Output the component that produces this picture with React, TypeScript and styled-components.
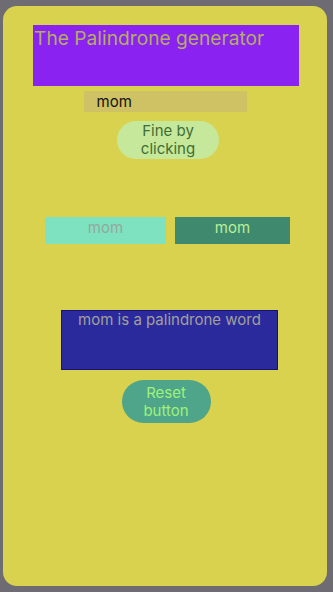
import React, { useState } from 'react'
import styled, { createGlobalStyle } from 'styled-components'

const GlobalStyle = createGlobalStyle`
    html, body {
        margin: 0;
        padding: 0;
        background: #6e6b72;
        font-family: Inter, "Noto Sans", sans-serif;
    }
`

const Screen = styled.div`
    box-sizing: border-box;
    width: 333px;
    height: 592px;
    padding: 6px 6px 6px 3px;
`

const Card = styled.div`
    display: flex;
    flex-direction: column;
    align-items: center;
    height: 580px;
    background: #d9d24e;
    border-radius: 14px;
`

const TitleBox = styled.div`
    box-sizing: border-box;
    width: 266px;
    height: 61px;
    margin: 19px 0 0 2px;
    padding-left: 1px;
    background: #8a22f2;
    color: #b4ad62;
    font-size: 19.2px;
    line-height: 26px;
`

const WordInput = styled.input`
    box-sizing: border-box;
    width: 163px;
    height: 21px;
    margin-top: 5px;
    padding: 0 0 0 13px;
    border: none;
    outline: none;
    background: #cfc264;
    color: #111;
    font-family: inherit;
    font-size: 15px;
`

const PillButton = styled.button<{ bg: string; fg: string; w: number; h: number; gap: number; shift: number }>`
    box-sizing: border-box;
    width: ${(p) => p.w}px;
    height: ${(p) => p.h}px;
    margin: ${(p) => p.gap}px 0 0 ${(p) => p.shift}px;
    padding: 0 18px;
    border: none;
    border-radius: ${(p) => p.h / 2}px;
    background: ${(p) => p.bg};
    color: ${(p) => p.fg};
    font-family: inherit;
    font-size: 15px;
    line-height: 18px;
`

const WordRow = styled.div`
    display: flex;
    gap: 9px;
    margin: 58px 0 0 5px;
`

const WordTile = styled.div<{ bg: string; fg: string; w: number }>`
    box-sizing: border-box;
    width: ${(p) => p.w}px;
    height: 27px;
    padding-top: 2px;
    background: ${(p) => p.bg};
    color: ${(p) => p.fg};
    text-align: center;
    font-size: 15px;
    line-height: 18px;
`

const ResultBox = styled.div`
    box-sizing: border-box;
    width: 217px;
    height: 60px;
    margin: 66px 0 0 9px;
    background: #2b2a9c;
    border: 1px solid #15137a;
    color: #a2a09a;
    text-align: center;
    font-size: 15px;
    line-height: 18px;
`

export default function App() {
    const [word, setWord] = useState('mom')
    const reversed = word.split('').reverse().join('')
    const isPalindrome = word === reversed

    return (
        <Screen>
            <GlobalStyle />
            <Card>
                <TitleBox>The Palindrone generator</TitleBox>
                <WordInput value={word} onChange={(e) => setWord(e.target.value)} />
                <PillButton bg="#c6e89a" fg="#3f6e34" w={102} h={38} gap={9} shift={6}>
                    Fine by clicking
                </PillButton>
                <WordRow>
                    <WordTile bg="#7ee2c1" fg="#93a99b" w={121}>{word}</WordTile>
                    <WordTile bg="#3f8a6e" fg="#b9ef98" w={115}>{reversed}</WordTile>
                </WordRow>
                <ResultBox>
                    {word} {isPalindrome ? 'is a palindrone word' : 'is not a palindrone word'}
                </ResultBox>
                <PillButton bg="#4fa58a" fg="#9ef27a" w={89} h={43} gap={10} shift={2} onClick={() => setWord('')}>
                    Reset button
                </PillButton>
            </Card>
        </Screen>
    )
}
